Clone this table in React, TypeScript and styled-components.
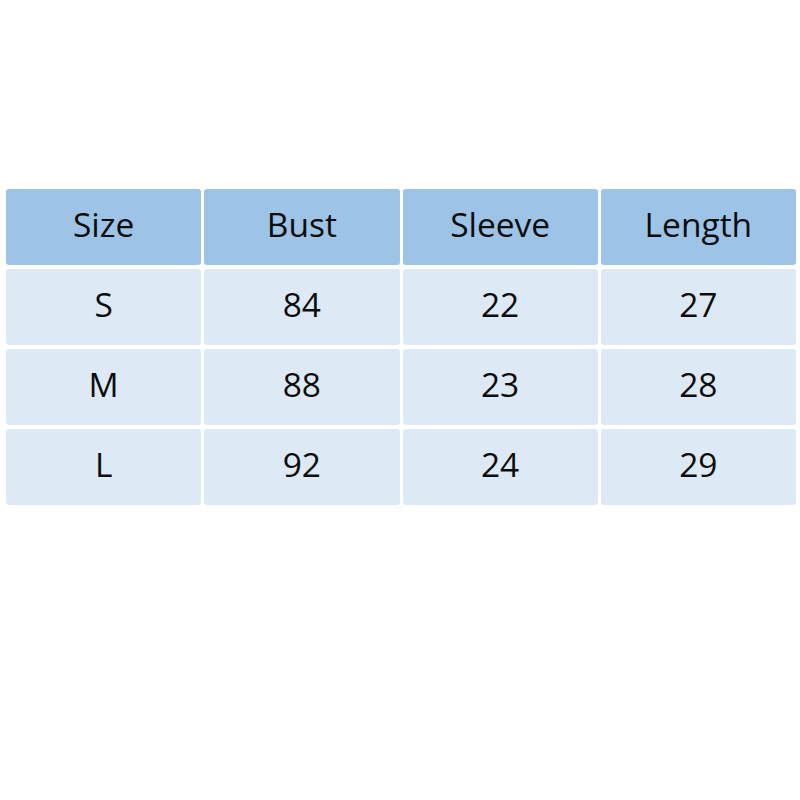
import styled, { createGlobalStyle } from 'styled-components';

const GlobalStyle = createGlobalStyle`
  html, body {
    margin: 0;
    padding: 0;
    background: #ffffff;
  }
  body {
    font-family: 'Open Sans', 'Noto Sans', sans-serif;
  }
`;

const Page = styled.div`
  width: 800px;
  height: 800px;
  padding: 189px 4px 0 6px;
  box-sizing: border-box;
`;

const Grid = styled.div`
  display: grid;
  grid-template-columns: repeat(4, 1fr);
  grid-auto-rows: 76px;
  column-gap: 3px;
  row-gap: 4px;
  width: 790px;
`;

const Cell = styled.div<{ $head?: boolean }>`
  display: flex;
  align-items: center;
  justify-content: center;
  border-radius: 3px;
  background: ${(p) => (p.$head ? '#9dc3e6' : '#ddeaf6')};
  color: #0d0d0d;
  font-size: 33.5px;
  line-height: 1;
  padding-bottom: 5px;
  box-sizing: border-box;
`;

const headers = ['Size', 'Bust', 'Sleeve', 'Length'];
const rows = [
  ['S', '84', '22', '27'],
  ['M', '88', '23', '28'],
  ['L', '92', '24', '29'],
];

const App = () => {
  return (
    <>
      <GlobalStyle />
      <Page>
        <Grid>
          {headers.map((h) => (
            <Cell key={h} $head>
              {h}
            </Cell>
          ))}
          {rows.map((r) => r.map((v, i) => <Cell key={`${r[0]}-${i}`}>{v}</Cell>))}
        </Grid>
      </Page>
    </>
  );
};

export default App;
